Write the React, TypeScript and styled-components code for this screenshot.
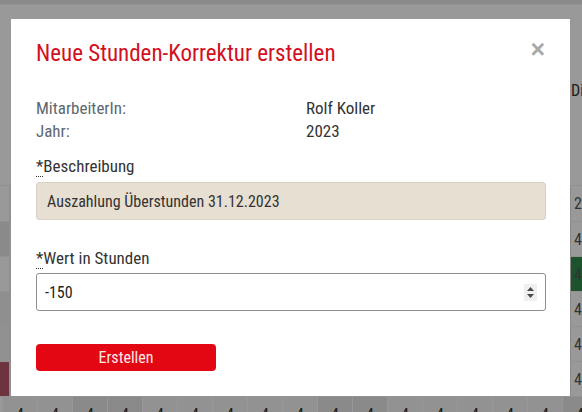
import React from 'react';
import styled, { createGlobalStyle } from 'styled-components';

const fontStack = `"Roboto Condensed", "Liberation Sans Narrow", Roboto, "Liberation Sans", sans-serif`;

const GlobalStyle = createGlobalStyle`
  html, body {
    margin: 0;
    padding: 0;
  }
  body {
    width: 582px;
    height: 412px;
    overflow: hidden;
    background: #ffffff;
    font-family: ${fontStack};
    color: #333333;
  }
  * {
    box-sizing: border-box;
  }
`;

/* ---------- page behind the dialog ---------- */

const Page = styled.div`
  display: flex;
  flex-direction: column;
  width: 582px;
  height: 412px;
  overflow: hidden;

  & > * {
    flex-shrink: 0;
  }
`;

const TopBar = styled.div`
  height: 5px;
  background: #e6e6e6;
  border-bottom: 1px solid #f4f4f4;
`;

const HeaderArea = styled.div`
  height: 180px;
  display: flex;
  justify-content: flex-end;
  padding-top: 76px;
`;

const DayLabel = styled.span`
  width: 12px;
  overflow: hidden;
  white-space: nowrap;
  font-size: 16px;
  padding-left: 1px;
`;

const Row = styled.div<{ $h?: number }>`
  height: ${p => p.$h ?? 35}px;
  display: flex;
  justify-content: space-between;
  border-top: 1px solid #f2f2f2;
`;

const EdgeCell = styled.div<{ $bg?: string }>`
  width: 12px;
  overflow: hidden;
  background: ${p => p.$bg ?? '#fff'};
  border-left: 1px solid #e4e4e4;
  font-size: 16px;
  color: #555;
  padding: 8px 0 0 3px;
  white-space: nowrap;
`;

const LeftCell = styled.div<{ $bg?: string }>`
  width: 11px;
  background: ${p => p.$bg ?? '#fff'};
  border-right: 2px solid #f0f0f0;
`;

const BottomRow = styled.div`
  display: flex;
  height: 30px;
  padding-left: 2px;
  border-top: 1px solid #f6f6f6;
  overflow: hidden;
`;

const BottomCell = styled.div<{ $dark?: boolean }>`
  flex: 0 0 35px;
  height: 100%;
  background: ${p => (p.$dark ? '#e6e6e6' : '#f4f4f4')};
  border-left: 1px solid #fdfdfd;
  font-size: 16px;
  color: #333;
  text-align: center;
  padding-top: 10px;
  line-height: 16px;
`;

/* ---------- dialog ---------- */

const Overlay = styled.div`
  position: fixed;
  inset: 0;
  background: rgba(0, 0, 0, 0.4);
  display: flex;
  align-items: flex-start;
  padding: 19px 0 0 11px;
`;

const Dialog = styled.div`
  width: 559px;
  height: 377px;
  background: #ffffff;
  padding: 23px 24px 0 25px;
  display: flex;
  flex-direction: column;
`;

const Header = styled.div`
  display: flex;
  justify-content: space-between;
  align-items: flex-start;
`;

const Title = styled.h4`
  margin: 0;
  font-size: 23px;
  line-height: 24px;
  font-weight: 400;
  color: #d2101e;
`;

const Close = styled.button`
  border: 0;
  background: none;
  padding: 0;
  margin: -3px 1px 0 0;
  font-family: "Liberation Sans", Arial, sans-serif;
  font-size: 25px;
  font-weight: 700;
  line-height: 20px;
  color: #a9a9a9;
  cursor: pointer;
`;

const InfoGrid = styled.div`
  display: grid;
  grid-template-columns: 270px 1fr;
  margin-top: 31px;
  font-size: 17px;
  line-height: 23px;
`;

const InfoLabel = styled.div`
  color: #5e6770;
`;

const InfoValue = styled.div`
  color: #333333;
`;

const Field = styled.div<{ $top: number }>`
  display: flex;
  flex-direction: column;
  margin-top: ${p => p.$top}px;
`;

const Label = styled.label<{ $gap: number }>`
  font-size: 17px;
  line-height: 23px;
  color: #333333;
  margin-bottom: ${p => p.$gap}px;
`;

const Required = styled.abbr`
  text-decoration: none;
  border-bottom: 1px dotted #333;
`;

const TextInput = styled.input`
  height: 38px;
  width: 510px;
  padding: 0 10px;
  border: 1px solid #d9d1c4;
  border-radius: 3px;
  background: #e7dfd2;
  font-family: ${fontStack};
  font-size: 16px;
  color: #333333;
  outline: none;
`;

const NumberBox = styled.div`
  height: 38px;
  width: 510px;
  display: flex;
  align-items: center;
  padding: 0 8px 0 8px;
  border: 1px solid #8f8f8f;
  border-radius: 3px;
  background: #ffffff;
`;

const NumberInput = styled.input`
  flex: 1;
  border: 0;
  outline: none;
  padding: 0;
  font-family: ${fontStack};
  font-size: 16px;
  color: #222222;
  background: transparent;
`;

const Spinner = styled.div`
  width: 13px;
  height: 17px;
  background: #efefef;
  display: flex;
  align-items: center;
  justify-content: center;
`;

const SubmitButton = styled.button`
  margin-top: 33px;
  width: 180px;
  height: 27px;
  border: 0;
  border-radius: 4px;
  background: #e30613;
  color: #fbe9ea;
  font-family: ${fontStack};
  font-size: 16px;
  line-height: 27px;
  padding: 0;
  cursor: pointer;
`;

const leftColors = ['#fff', '#e7e7e7', '#fff', '#efefef', '#f2f2f2', '#b65568'];
const rightCells = [
  { bg: '#fff', text: '24' },
  { bg: '#fff', text: '4' },
  { bg: '#2f8a4c', text: '4' },
  { bg: '#fff', text: '4' },
  { bg: '#fff', text: '4' },
  { bg: '#fff', text: '4' },
];
const bottomDark = [false, false, true, true, false, false, false, false, false, true, true, false, false, false, false, false, true];

const App: React.FC = () => {
  return (
    <>
      <GlobalStyle />
      <Page>
        <TopBar />
        <HeaderArea>
          <DayLabel>Di</DayLabel>
        </HeaderArea>
        {rightCells.map((cell, i) => (
          <Row key={i} $h={i === 0 ? 36 : 35}>
            <LeftCell $bg={leftColors[i]} />
            <EdgeCell $bg={cell.bg}>{cell.text}</EdgeCell>
          </Row>
        ))}
        <BottomRow>
          {bottomDark.map((dark, i) => (
            <BottomCell key={i} $dark={dark}>4</BottomCell>
          ))}
        </BottomRow>
      </Page>

      <Overlay>
        <Dialog>
          <Header>
            <Title>Neue Stunden-Korrektur erstellen</Title>
            <Close aria-label="Schliessen">×</Close>
          </Header>

          <InfoGrid>
            <InfoLabel>MitarbeiterIn:</InfoLabel>
            <InfoValue>Rolf Koller</InfoValue>
            <InfoLabel>Jahr:</InfoLabel>
            <InfoValue>2023</InfoValue>
          </InfoGrid>

          <Field $top={12}>
            <Label $gap={4}>
              <Required title="Pflichtfeld">*</Required>Beschreibung
            </Label>
            <TextInput defaultValue="Auszahlung Überstunden 31.12.2023" />
          </Field>

          <Field $top={27}>
            <Label $gap={3}>
              <Required title="Pflichtfeld">*</Required>Wert in Stunden
            </Label>
            <NumberBox>
              <NumberInput defaultValue="-150" />
              <Spinner>
                <svg width="9" height="13" viewBox="0 0 9 13">
                  <path d="M4.5 1 L8 5 L1 5 Z" fill="#4a4a4a" />
                  <path d="M1 8 L8 8 L4.5 12 Z" fill="#4a4a4a" />
                </svg>
              </Spinner>
            </NumberBox>
          </Field>

          <SubmitButton>Erstellen</SubmitButton>
        </Dialog>
      </Overlay>
    </>
  );
};

export default App;
